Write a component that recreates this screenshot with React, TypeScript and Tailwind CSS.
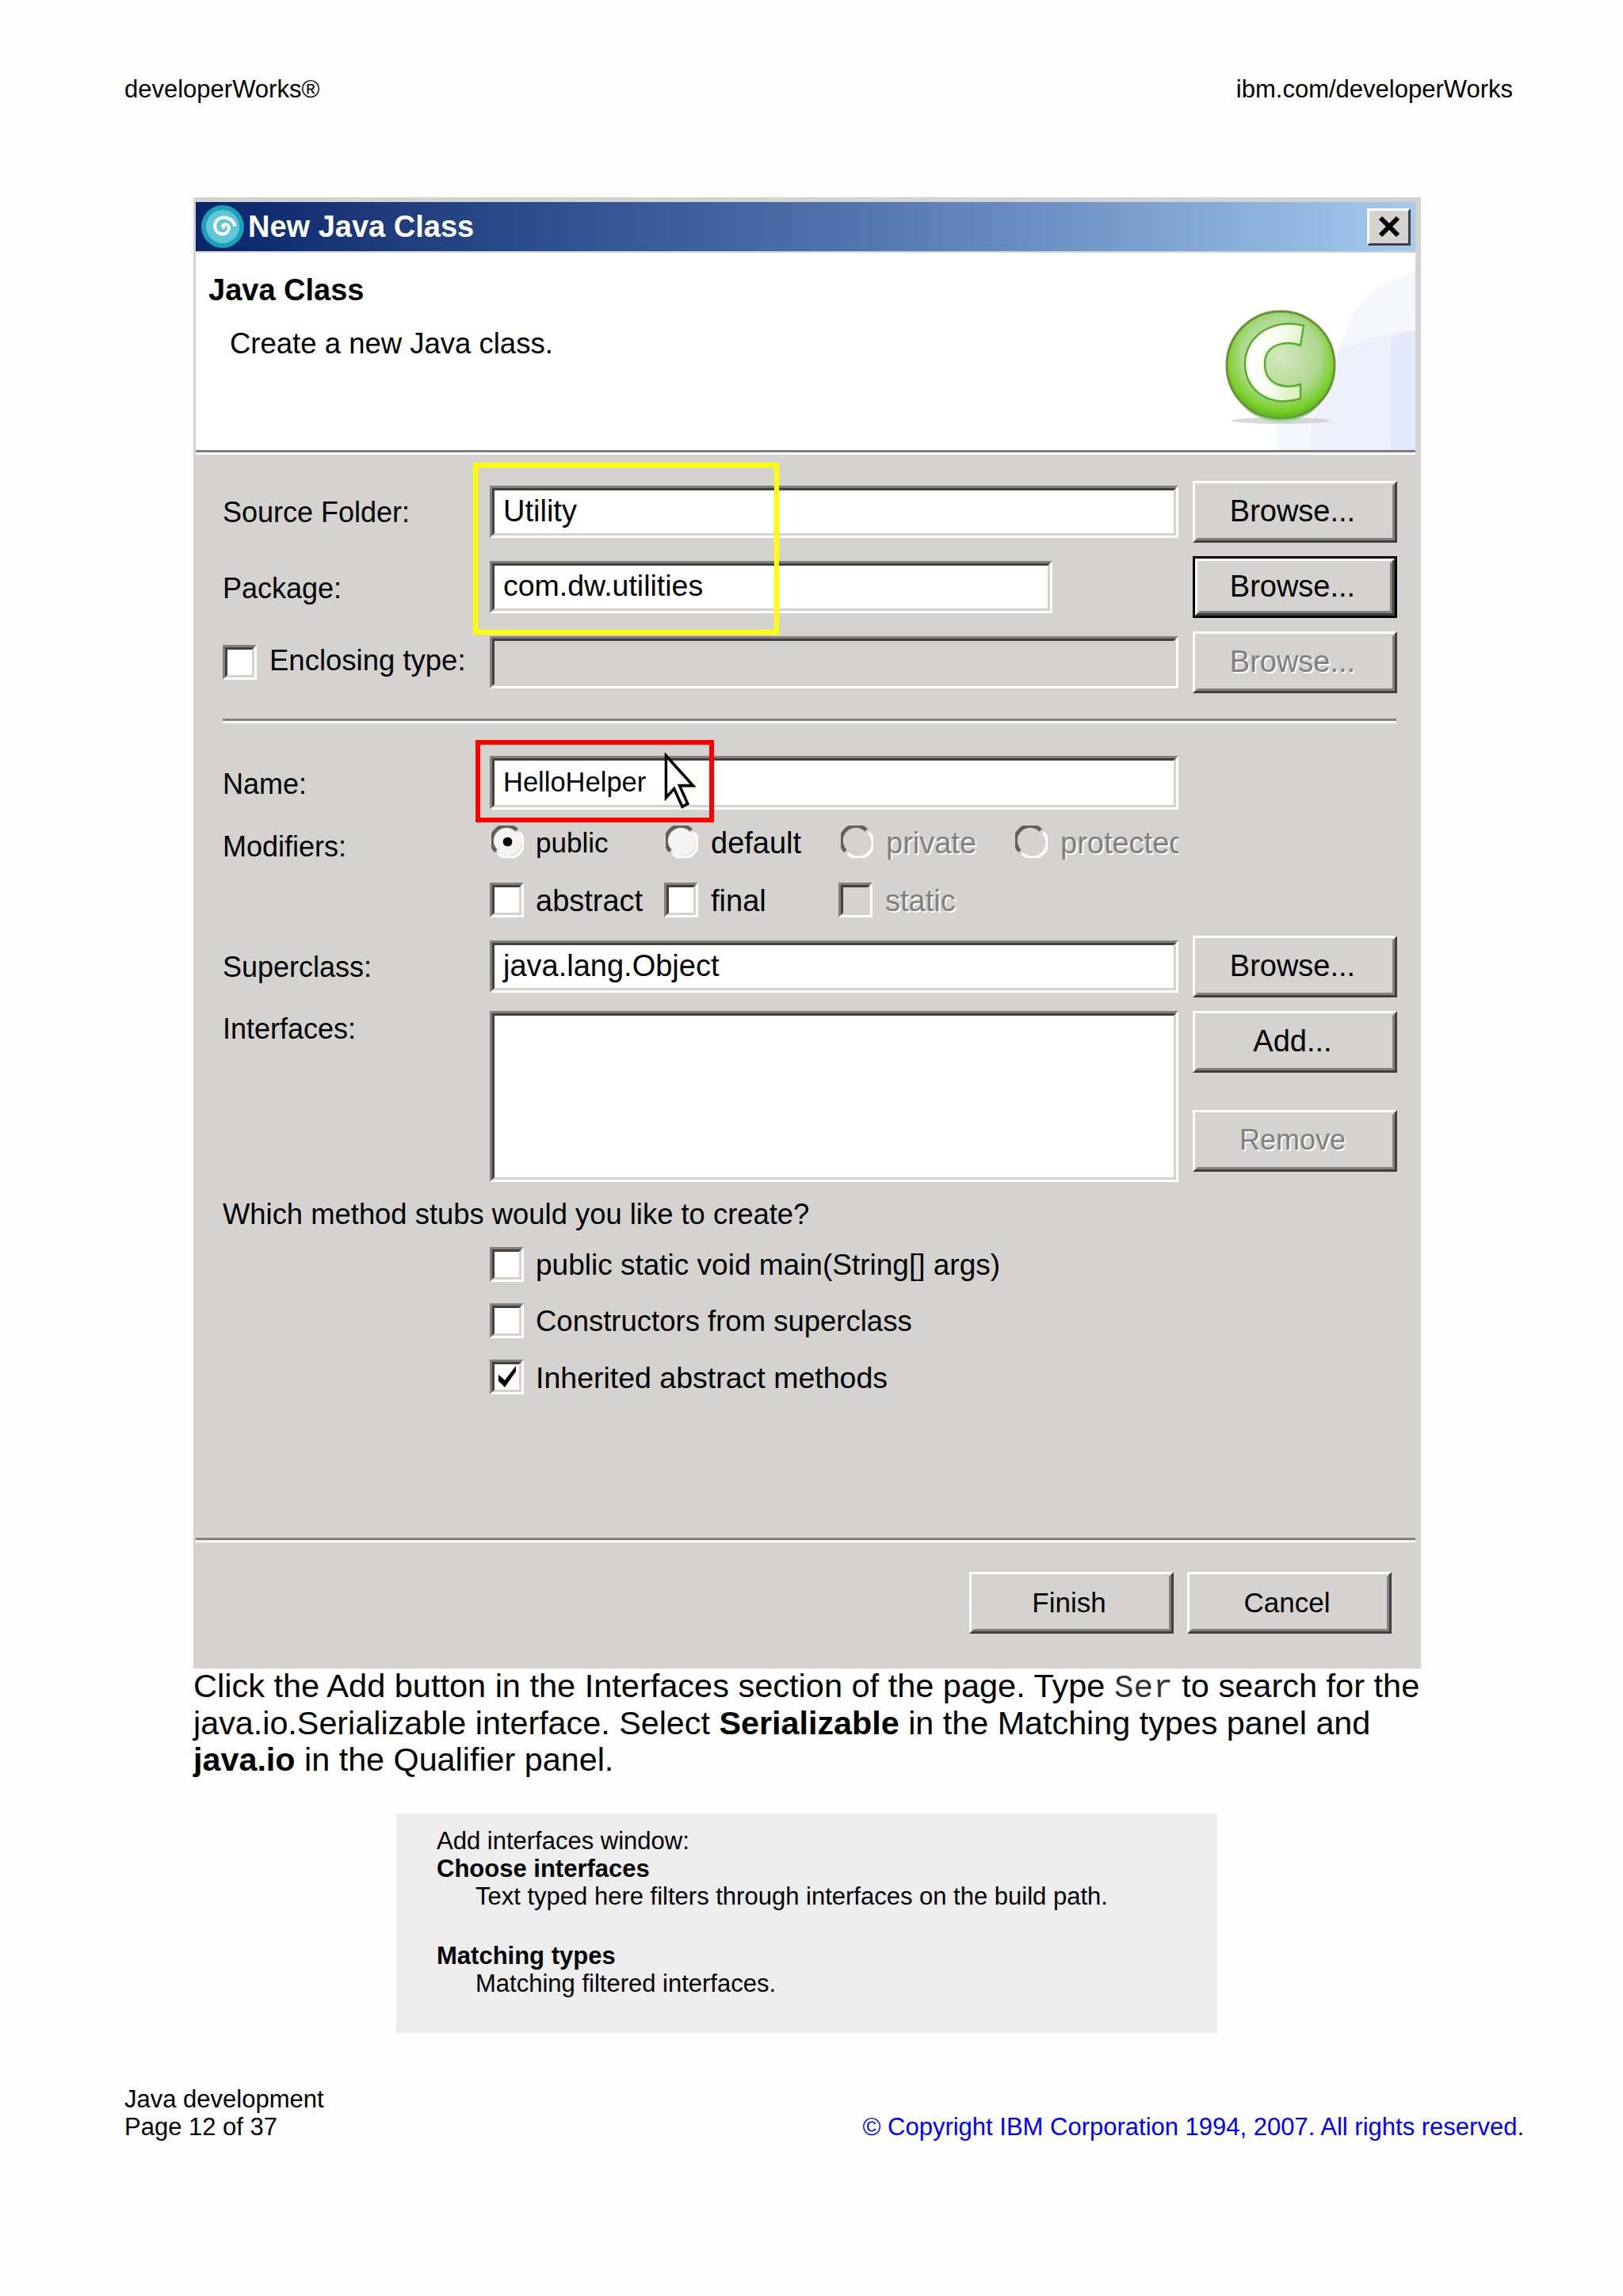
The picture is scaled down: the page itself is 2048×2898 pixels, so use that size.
const SANS = 'font-["Liberation_Sans",Arial,sans-serif]';

function Sunken({ className = '', inner = 'bg-white', children }: { className?: string; inner?: string; children?: React.ReactNode }) {
  return (
    <div className={`border-[3px] border-t-[#808080] border-l-[#808080] border-r-white border-b-white ${className}`}>
      <div className={`w-full h-full border-[3px] border-t-[#404040] border-l-[#404040] border-r-[#d4d3cf] border-b-[#d4d3cf] overflow-hidden ${inner}`}>
        {children}
      </div>
    </div>
  );
}

function TextField({ value, className = 'w-[869px]', disabled = false, size = 'text-[38px]' }: { value?: string; className?: string; disabled?: boolean; size?: string }) {
  return (
    <Sunken className={`h-[66px] shrink-0 ${className}`} inner={disabled ? 'bg-[#d4d3cf]' : 'bg-white'}>
      <div className={`h-full flex items-center pl-[11px] text-black leading-none -mt-[1px] ${size}`}>{value}</div>
    </Sunken>
  );
}

function WinButton({ label, disabled = false, focused = false, size = 'text-[38px]' }: { label: string; disabled?: boolean; focused?: boolean; size?: string }) {
  return (
    <div className={`shrink-0 w-[258px] h-[78px] ${focused ? 'border-[3px] border-black' : ''}`}>
      <div className="w-full h-full border-[3px] border-t-white border-l-white border-r-[#404040] border-b-[#404040]">
        <div className="w-full h-full border-[3px] border-t-[#d4d3cf] border-l-[#d4d3cf] border-r-[#808080] border-b-[#808080] flex items-center justify-center">
          <span className={`leading-none -ml-[6px] -mt-[2px] ${size} ${disabled ? 'text-[#808080] [text-shadow:2px_2px_0_#fff]' : 'text-black'}`}>{label}</span>
        </div>
      </div>
    </div>
  );
}

function CheckBox({ checked = false, disabled = false }: { checked?: boolean; disabled?: boolean }) {
  return (
    <Sunken className="w-[43px] h-[44px] shrink-0" inner={disabled ? 'bg-[#d4d3cf]' : 'bg-white'}>
      {checked && (
        <svg viewBox="0 0 31 32" className="w-full h-full">
          <path d="M5 13 L5 21 L13 29 L27 9 L27 2 L13 20 Z" fill="#000" />
        </svg>
      )}
    </Sunken>
  );
}

function Radio({ selected = false, disabled = false }: { selected?: boolean; disabled?: boolean }) {
  return (
    <svg viewBox="0 0 42 42" className="w-[41px] h-[41px] shrink-0">
      <circle cx="21" cy="21" r="18" fill={disabled ? '#d4d3cf' : '#f4f4f4'} />
      <path d="M6 33 A19 19 0 0 1 33 6" fill="none" stroke="#606060" strokeWidth="5" />
      <path d="M36 9 A19 19 0 0 1 9 36" fill="none" stroke="#ffffff" strokeWidth="4" />
      {selected && <circle cx="21" cy="21" r="6" fill="#000" />}
    </svg>
  );
}

function Option({ label, disabled = false, box, offset, width, size = 'text-[38px]' }: { label: string; disabled?: boolean; box: React.ReactNode; offset: string; width: string; size?: string }) {
  return (
    <div className={`flex items-center shrink-0 overflow-hidden ${width}`}>
      {box}
      <span className={`leading-[42px] pt-[2px] whitespace-nowrap ${size} ${offset} ${disabled ? 'text-[#808080] [text-shadow:2px_2px_0_#fff]' : 'text-black'}`}>{label}</span>
    </div>
  );
}

function Label({ children, className = 'mt-[2px]' }: { children: React.ReactNode; className?: string }) {
  return <div className={`text-[36px] leading-none text-black w-[337px] shrink-0 ${className}`}>{children}</div>;
}

function Separator({ className = '' }: { className?: string }) {
  return <div className={`h-[6px] border-t-[3px] border-t-[#808080] border-b-[3px] border-b-white ${className}`} />;
}

function SpiralIcon() {
  return (
    <svg viewBox="0 0 56 56" className="w-[56px] h-[56px] shrink-0">
      <ellipse cx="28" cy="28" rx="27" ry="27" fill="#19a2b8" />
      <ellipse cx="28" cy="28" rx="21" ry="21" fill="#62c6d6" />
      <path
        d="M29 29 C26 26 32 23 35 27 C38 33 32 39 25 37 C17 34 16 24 22 19 C29 14 40 17 43 26"
        fill="none"
        stroke="#ffffff"
        strokeWidth="4"
        strokeLinecap="round"
      />
    </svg>
  );
}

function ClassIcon() {
  return (
    <svg viewBox="0 0 150 150" className="w-[150px] h-[150px]">
      <defs>
        <radialGradient id="ball" cx="0.5" cy="0.42" r="0.6">
          <stop offset="0" stopColor="#d5e8c0" />
          <stop offset="0.6" stopColor="#b0d890" />
          <stop offset="0.84" stopColor="#78d028" />
          <stop offset="1" stopColor="#4ca81a" />
        </radialGradient>
        <linearGradient id="letter" x1="0" y1="0" x2="1" y2="0.3">
          <stop offset="0" stopColor="#ffffff" />
          <stop offset="0.6" stopColor="#f8fcf0" />
          <stop offset="1" stopColor="#dff0c5" />
        </linearGradient>
      </defs>
      <ellipse cx="70" cy="140" rx="62" ry="4" fill="#c8c8c8" opacity="0.7" />
      <circle cx="70" cy="70" r="68" fill="url(#ball)" stroke="#6f8f3a" strokeWidth="3" />
      <path d="M22 122 A68 68 0 0 0 118 122 A80 80 0 0 1 22 122 Z" fill="#8fd8a8" opacity="0.8" />
      <path
        d="M99 20 L95 45 C80 38 50 42 50 68 C50 98 80 100 95 94 L95 112 C60 124 25 105 25 68 C25 30 65 10 99 20 Z"
        fill="url(#letter)"
        stroke="#58ad2c"
        strokeWidth="2.5"
      />
    </svg>
  );
}

function HeaderBackdrop() {
  return (
    <svg viewBox="0 0 186 249" className="absolute right-0 top-0 w-[186px] h-[249px]">
      <path d="M186 24 C150 35 125 50 107 78 L85 130 L10 221 L10 249 L186 249 Z" fill="#f6f7fd" />
      <path d="M54 249 L54 221 L87 124 C120 110 150 100 186 98 L186 249 Z" fill="#eef1fc" />
      <path d="M155 108 C165 102 175 100 186 98 L186 249 L155 249 Z" fill="#e2e9fa" />
    </svg>
  );
}

function NewJavaClassDialog() {
  return (
    <div className="relative ml-[244px] w-[1549px] h-[1857px] bg-[#d4d3cf] pt-[6px] shrink-0">
      {/* Title bar */}
      <div className="ml-[3px] mr-[7px] h-[62px] flex items-center pl-[6px] pr-[6px] bg-gradient-to-r from-[#0a246a] via-[#4c6da8] to-[#a6caf0]">
        <SpiralIcon />
        <span className="ml-[4px] text-[38px] font-bold text-white leading-none">New Java Class</span>
        <div className="ml-auto w-[55px] h-[47px] border-[3px] border-t-white border-l-white border-r-[#404040] border-b-[#404040] bg-[#d4d3cf] flex items-center justify-center">
          <svg viewBox="0 0 30 30" className="w-[30px] h-[30px]">
            <path d="M4 4 L26 26 M26 4 L4 26" stroke="#000" strokeWidth="6" />
          </svg>
        </div>
      </div>

      {/* Banner */}
      <div className="relative ml-[3px] mr-[7px] mt-[2px] h-[249px] bg-white flex overflow-hidden">
        <HeaderBackdrop />
        <div className="relative pl-[16px] pt-[28px]">
          <div className="text-[38px] font-bold text-black leading-none">Java Class</div>
          <div className="mt-[31px] pl-[27px] text-[36.5px] text-black leading-none">Create a new Java class.</div>
        </div>
        <div className="relative ml-auto mr-[90px] mt-[72px]">
          <ClassIcon />
        </div>
      </div>
      <Separator className="ml-[3px] mr-[7px] h-[5px]" />

      {/* Form */}
      <div className="pl-[37px] pt-[33px]">
        <div className="flex items-center h-[78px]">
          <Label>Source Folder:</Label>
          <TextField value="Utility" />
          <div className="ml-[18px]"><WinButton label="Browse..." /></div>
        </div>
        <div className="flex items-center h-[78px] mt-[17px]">
          <Label className="mt-[4px]">Package:</Label>
          <TextField value="com.dw.utilities" size="text-[37.5px]" className="w-[710px] mr-[159px]" />
          <div className="ml-[18px]"><WinButton label="Browse..." focused /></div>
        </div>
        <div className="flex items-center h-[78px] mt-[17px]">
          <div className="w-[337px] shrink-0 flex items-center">
            <CheckBox />
            <span className="ml-[16px] -mt-[3px] text-[36.5px] leading-none text-black whitespace-nowrap">Enclosing type:</span>
          </div>
          <TextField disabled />
          <div className="ml-[18px]"><WinButton label="Browse..." disabled /></div>
        </div>

        <Separator className="w-[1481px] mt-[32px]" />

        <div className="flex items-center h-[68px] mt-[41px]">
          <Label className="mt-[4px]">Name:</Label>
          <TextField value="HelloHelper" size="text-[34.5px]" className="w-[869px] !h-[68px]" />
        </div>

        <div className="flex items-center h-[41px] mt-[20px]">
          <Label className="mt-[12px]">Modifiers:</Label>
          <div className="flex items-center pl-[2px] w-[869px] overflow-hidden">
            <Option width="w-[220px]" offset="ml-[15px]" size="text-[35px]" box={<Radio selected />} label="public" />
            <Option width="w-[221px]" offset="ml-[16px]" box={<Radio />} label="default" />
            <Option width="w-[220px]" offset="ml-[16px]" disabled box={<Radio disabled />} label="private" />
            <Option width="w-[206px]" offset="ml-[16px]" disabled box={<Radio disabled />} label="protected" />
          </div>
        </div>

        <div className="flex items-center h-[44px] mt-[31px]">
          <div className="w-[337px] shrink-0" />
          <Option width="w-[220px]" offset="ml-[15px]" box={<CheckBox />} label="abstract" />
          <Option width="w-[220px]" offset="ml-[16px]" box={<CheckBox />} label="final" />
          <Option width="w-[220px]" offset="ml-[16px]" disabled box={<CheckBox disabled />} label="static" />
        </div>

        <div className="flex items-center h-[78px] mt-[23px]">
          <Label>Superclass:</Label>
          <TextField value="java.lang.Object" />
          <div className="ml-[18px]"><WinButton label="Browse..." /></div>
        </div>

        <div className="flex items-start h-[216px] mt-[17px]">
          <Label className="mt-[5px]">Interfaces:</Label>
          <Sunken className="w-[869px] h-[216px] shrink-0" />
          <div className="ml-[18px] flex flex-col gap-[47px]">
            <WinButton label="Add..." />
            <WinButton label="Remove" size="text-[36px]" disabled />
          </div>
        </div>

        <div className="mt-[21px] h-[40px] flex items-center text-[36.4px] leading-none text-black">
          Which method stubs would you like to create?
        </div>

        <div className="ml-[337px] mt-[21px] flex flex-col gap-[27px]">
          <Option width="w-[869px]" offset="ml-[15px]" size="text-[37px]" box={<CheckBox />} label="public static void main(String[] args)" />
          <Option width="w-[869px]" offset="ml-[15px]" size="text-[36.5px]" box={<CheckBox />} label="Constructors from superclass" />
          <Option width="w-[869px]" offset="ml-[15px]" size="text-[37.5px]" box={<CheckBox checked />} label="Inherited abstract methods" />
        </div>
      </div>

      <Separator className="ml-[3px] mr-[7px] mt-[181px]" />

      <div className="flex justify-end gap-[17px] pr-[37px] pt-[37px]">
        <WinButton label="Finish" size="text-[35px]" />
        <WinButton label="Cancel" size="text-[35px]" />
      </div>

      {/* Callouts drawn over the dialog */}
      <div className="absolute left-[353px] top-[335px] w-[386px] h-[217px] border-[6px] border-[#ffff00]" />
      <div className="absolute left-[356px] top-[685px] w-[301px] h-[104px] border-[6px] border-[#ff0000]" />
      <svg viewBox="0 0 12 19" preserveAspectRatio="none" className="absolute left-[593px] top-[701px] w-[41px] h-[72px]">
        <path d="M1 1 L1 15 L4 12 L7 18 L9 17 L6 11 L11 11 Z" fill="#fff" stroke="#000" strokeWidth="1" />
      </svg>
    </div>
  );
}

export default function App() {
  return (
    <div className={`w-[2048px] h-[2898px] bg-[#fefefe] flex flex-col text-black overflow-hidden ${SANS}`}>
      <div className="h-[249px] shrink-0 pt-[95px] pl-[157px] pr-[139px] flex justify-between text-[31px] leading-[35px]">
        <span>developerWorks®</span>
        <span>ibm.com/developerWorks</span>
      </div>

      <NewJavaClassDialog />

      <p className="ml-[244px] -mt-[1px] text-[41.3px] leading-[46px] whitespace-nowrap h-[139px] shrink-0">
        <span className="text-[41.5px]">
          Click the Add button in the Interfaces section of the page. Type{' '}
          <span className='font-["Liberation_Mono",monospace] text-[#333] text-[41px] leading-none'>Ser</span> to search for the
        </span>
        <br />
        java.io.Serializable interface. Select <b>Serializable</b> in the Matching types panel and
        <br />
        <b>java.io</b> in the Qualifier panel.
      </p>

      <div className="ml-[500px] mt-[45px] w-[1036px] h-[277px] shrink-0 bg-[#eeedee] pt-[17px] pl-[51px] text-[31px] leading-[35px]">
        <div>Add interfaces window:</div>
        <div className="font-bold">Choose interfaces</div>
        <div className="pl-[49px]">Text typed here filters through interfaces on the build path.</div>
        <div className="font-bold mt-[40px]">Matching types</div>
        <div className="pl-[49px]">Matching filtered interfaces.</div>
      </div>

      <div className="mt-[66px] pl-[157px] pr-[125px] flex justify-between items-end text-[31px] leading-[35px]">
        <div>
          <div>Java development</div>
          <div>Page 12 of 37</div>
        </div>
        <div className="text-[#0000ff]">© Copyright IBM Corporation 1994, 2007. All rights reserved.</div>
      </div>
    </div>
  );
}
